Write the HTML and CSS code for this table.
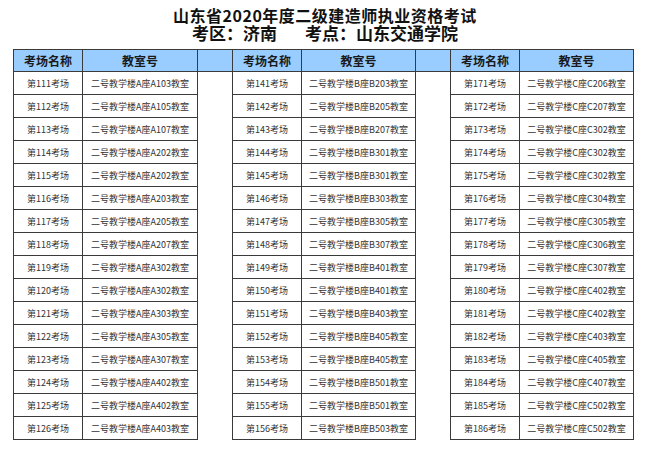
FILE: index.html
```html
<!DOCTYPE html>
<html lang="zh-CN">
<head>
<meta charset="utf-8">
<title>考场安排</title>
<link rel="stylesheet" href="styles.css">
</head>
<body>
<div class="title">
  <div class="t1">山东省2020年度二级建造师执业资格考试</div>
  <div class="t2"><span>考区：济南</span><span class="gap"></span><span>考点：山东交通学院</span></div>
</div>
<div class="sheet">
  <div class="tbl t-a">
    <div class="h">考场名称</div><div class="h">教室号</div>
    <div class="c">第111考场</div><div class="c">二号教学楼A座A103教室</div>
    <div class="c">第112考场</div><div class="c">二号教学楼A座A105教室</div>
    <div class="c">第113考场</div><div class="c">二号教学楼A座A107教室</div>
    <div class="c">第114考场</div><div class="c">二号教学楼A座A202教室</div>
    <div class="c">第115考场</div><div class="c">二号教学楼A座A202教室</div>
    <div class="c">第116考场</div><div class="c">二号教学楼A座A203教室</div>
    <div class="c">第117考场</div><div class="c">二号教学楼A座A205教室</div>
    <div class="c">第118考场</div><div class="c">二号教学楼A座A207教室</div>
    <div class="c">第119考场</div><div class="c">二号教学楼A座A302教室</div>
    <div class="c">第120考场</div><div class="c">二号教学楼A座A302教室</div>
    <div class="c">第121考场</div><div class="c">二号教学楼A座A303教室</div>
    <div class="c">第122考场</div><div class="c">二号教学楼A座A305教室</div>
    <div class="c">第123考场</div><div class="c">二号教学楼A座A307教室</div>
    <div class="c">第124考场</div><div class="c">二号教学楼A座A402教室</div>
    <div class="c">第125考场</div><div class="c">二号教学楼A座A402教室</div>
    <div class="c">第126考场</div><div class="c">二号教学楼A座A403教室</div>
  </div>
  <div class="spacer"><div class="sh"></div></div>
  <div class="tbl t-b">
    <div class="h">考场名称</div><div class="h">教室号</div>
    <div class="c">第141考场</div><div class="c">二号教学楼B座B203教室</div>
    <div class="c">第142考场</div><div class="c">二号教学楼B座B205教室</div>
    <div class="c">第143考场</div><div class="c">二号教学楼B座B207教室</div>
    <div class="c">第144考场</div><div class="c">二号教学楼B座B301教室</div>
    <div class="c">第145考场</div><div class="c">二号教学楼B座B301教室</div>
    <div class="c">第146考场</div><div class="c">二号教学楼B座B303教室</div>
    <div class="c">第147考场</div><div class="c">二号教学楼B座B305教室</div>
    <div class="c">第148考场</div><div class="c">二号教学楼B座B307教室</div>
    <div class="c">第149考场</div><div class="c">二号教学楼B座B401教室</div>
    <div class="c">第150考场</div><div class="c">二号教学楼B座B401教室</div>
    <div class="c">第151考场</div><div class="c">二号教学楼B座B403教室</div>
    <div class="c">第152考场</div><div class="c">二号教学楼B座B405教室</div>
    <div class="c">第153考场</div><div class="c">二号教学楼B座B405教室</div>
    <div class="c">第154考场</div><div class="c">二号教学楼B座B501教室</div>
    <div class="c">第155考场</div><div class="c">二号教学楼B座B501教室</div>
    <div class="c">第156考场</div><div class="c">二号教学楼B座B503教室</div>
  </div>
  <div class="spacer"><div class="sh"></div></div>
  <div class="tbl t-b">
    <div class="h">考场名称</div><div class="h">教室号</div>
    <div class="c">第171考场</div><div class="c">二号教学楼C座C206教室</div>
    <div class="c">第172考场</div><div class="c">二号教学楼C座C207教室</div>
    <div class="c">第173考场</div><div class="c">二号教学楼C座C302教室</div>
    <div class="c">第174考场</div><div class="c">二号教学楼C座C302教室</div>
    <div class="c">第175考场</div><div class="c">二号教学楼C座C302教室</div>
    <div class="c">第176考场</div><div class="c">二号教学楼C座C304教室</div>
    <div class="c">第177考场</div><div class="c">二号教学楼C座C305教室</div>
    <div class="c">第178考场</div><div class="c">二号教学楼C座C306教室</div>
    <div class="c">第179考场</div><div class="c">二号教学楼C座C307教室</div>
    <div class="c">第180考场</div><div class="c">二号教学楼C座C402教室</div>
    <div class="c">第181考场</div><div class="c">二号教学楼C座C402教室</div>
    <div class="c">第182考场</div><div class="c">二号教学楼C座C403教室</div>
    <div class="c">第183考场</div><div class="c">二号教学楼C座C405教室</div>
    <div class="c">第184考场</div><div class="c">二号教学楼C座C407教室</div>
    <div class="c">第185考场</div><div class="c">二号教学楼C座C502教室</div>
    <div class="c">第186考场</div><div class="c">二号教学楼C座C502教室</div>
  </div>
</div>
</body>
</html>
```
FILE: styles.css
```css
html, body {
  margin: 0;
  padding: 0;
  background: #ffffff;
}
body {
  width: 650px;
  height: 452px;
  overflow: hidden;
  font-family: "Noto Sans CJK SC", "Noto Sans", sans-serif;
  color: #222;
}
.title {
  padding-top: 6px;
  margin-bottom: 7px;
  text-align: center;
  font-weight: bold;
  color: #111;
}
.t1 {
  font-size: 16px;
  line-height: 18px;
  letter-spacing: 0.5px;
}
.t2 {
  font-size: 17px;
  line-height: 18px;
  display: flex;
  justify-content: center;
}
.t2 .gap {
  width: 28px;
}
.sheet {
  display: flex;
  padding-left: 13px;
  align-items: flex-start;
}
.tbl {
  display: grid;
  grid-template-columns: 69px 115px;
  grid-auto-rows: 23px;
  grid-template-rows: 22px;
  border-left: 1px solid #3a3a3a;
  border-top: 1px solid #3a3a3a;
}
.tbl.t-b {
  grid-template-columns: 69px 114px;
}
.h, .c {
  box-sizing: border-box;
  border-right: 1px solid #3a3a3a;
  border-bottom: 1px solid #3a3a3a;
  display: flex;
  align-items: center;
  justify-content: center;
  white-space: nowrap;
}
.h {
  background: #99ccff;
  font-size: 12px;
  font-weight: bold;
  color: #1a1a1a;
}
.c {
  font-size: 9px;
  color: #333;
  background: #fff;
}
.spacer {
  width: 34px;
}
.sh {
  box-sizing: border-box;
  height: 23px;
  background: #99ccff;
  border-top: 1px solid #3a3a3a;
  border-bottom: 1px solid #3a3a3a;
}
```
